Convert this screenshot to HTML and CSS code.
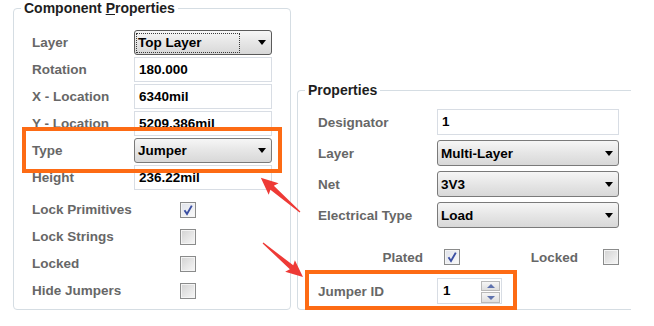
FILE: index.html
```html
<!DOCTYPE html>
<html lang="en">
<head>
    <meta charset="UTF-8">
    <title>Component Properties</title>
    <link rel="stylesheet" href="styles.css">
</head>
<body>
    <div class="screen">
        <fieldset class="group group-component">
            <legend>Component <u>P</u>roperties</legend>
            <div class="form form-component">
                <span class="label">Layer</span>
                <div class="combo combo-focused"><span class="combo-text"><span class="focus-rect">Top Layer</span></span><span class="combo-arrow"></span></div>
                <span class="label">Rotation</span>
                <div class="field">180.000</div>
                <span class="label">X - Location</span>
                <div class="field">6340mil</div>
                <span class="label">Y - Location</span>
                <div class="field">5209.386mil</div>
                <span class="label">Type</span>
                <div class="combo"><span class="combo-text">Jumper</span><span class="combo-arrow"></span></div>
                <span class="label">Height</span>
                <div class="field">236.22mil</div>
            </div>
            <div class="checks">
                <div class="check-row">
                    <span class="label">Lock Primitives</span>
                    <span class="checkbox checked"><svg width="12" height="12" viewBox="0 0 12 12"><path d="M2.5 6.2 L5 10 L9.8 1.6" fill="none" stroke="#3b4fa3" stroke-width="1.9"/></svg></span>
                </div>
                <div class="check-row">
                    <span class="label">Lock Strings</span>
                    <span class="checkbox"></span>
                </div>
                <div class="check-row">
                    <span class="label">Locked</span>
                    <span class="checkbox"></span>
                </div>
                <div class="check-row">
                    <span class="label">Hide Jumpers</span>
                    <span class="checkbox"></span>
                </div>
            </div>
        </fieldset>

        <fieldset class="group group-pad">
            <legend>Properties</legend>
            <div class="form form-pad">
                <span class="label">Designator</span>
                <div class="field">1</div>
                <span class="label">Layer</span>
                <div class="combo"><span class="combo-text">Multi-Layer</span><span class="combo-arrow"></span></div>
                <span class="label">Net</span>
                <div class="combo"><span class="combo-text">3V3</span><span class="combo-arrow"></span></div>
                <span class="label">Electrical Type</span>
                <div class="combo"><span class="combo-text">Load</span><span class="combo-arrow"></span></div>
            </div>
            <div class="form form-pad flags">
                <span class="label label-right">Plated</span>
                <div class="flag-cell">
                    <span class="checkbox checked"><svg width="12" height="12" viewBox="0 0 12 12"><path d="M2.5 6.2 L5 10 L9.8 1.6" fill="none" stroke="#3b4fa3" stroke-width="1.9"/></svg></span>
                    <span class="label flag-locked">Locked</span>
                    <span class="checkbox"></span>
                </div>
            </div>
            <div class="form form-pad jumper">
                <span class="label">Jumper ID</span>
                <div class="spin">
                    <span class="spin-value">1</span>
                    <span class="spin-buttons">
                        <span class="spin-btn"><span class="tri-up"></span></span>
                        <span class="spin-btn"><span class="tri-down"></span></span>
                    </span>
                </div>
            </div>
        </fieldset>

        <div class="highlight highlight-type"></div>
        <div class="highlight highlight-jumper"></div>

        <svg class="arrows" width="654" height="326" viewBox="0 0 654 326">
            <polygon transform="translate(300 212) rotate(221.1)" points="0,-0.6 37,-2.6 35,-7.5 52,0 35,7.5 37,2.6 0,0.6" fill="#ee3a36"/>
            <polygon transform="translate(263 243) rotate(40.4)" points="0,-0.6 37.5,-2.6 35.5,-7.5 52.5,0 35.5,7.5 37.5,2.6 0,0.6" fill="#ee3a36"/>
        </svg>
    </div>
</body>
</html>
```

FILE: styles.css
```css
* {
    margin: 0;
    padding: 0;
    box-sizing: border-box;
}

body {
    background-color: #fff;
    font-family: "Liberation Sans", Arial, sans-serif;
    font-size: 13.5px;
    font-weight: bold;
    color: #676767;
}

.screen {
    position: relative;
    width: 654px;
    height: 326px;
    display: flex;
    align-items: flex-start;
    padding-left: 13px;
    overflow: hidden;
}

/* group boxes */
.group {
    border: 1px solid #d5dde3;
    border-radius: 4px;
    min-width: 0;
}

.group legend {
    padding: 0 3px;
    font-size: 14px;
    line-height: 16px;
    color: #1e1e1e;
}

.group legend u {
    text-decoration-thickness: 1px;
}

.group-component {
    width: 278px;
    height: 310px;
    padding: 14px 0 0 7px;
}

.group-pad {
    width: 334px;
    height: 228px;
    margin: 82px 0 0 6px;
    padding: 11px 0 0 7px;
    border-right: none;
    border-radius: 4px 0 0 4px;
}

/* label / control grid */
.form {
    display: grid;
    align-items: center;
}

.form-component {
    grid-template-columns: 102px 138px;
    grid-auto-rows: 25px;
    row-gap: 2px;
    margin-left: 11px;
}

.form-pad {
    grid-template-columns: 119px 182px;
    grid-auto-rows: 26px;
    row-gap: 5px;
    margin-left: 13px;
}

.label {
    white-space: nowrap;
}

.label-right {
    text-align: right;
    padding-right: 14px;
}

.field {
    height: 100%;
    border: 1px solid #d8dde4;
    background-color: #fff;
    color: #000;
    padding-left: 4px;
    line-height: 23px;
    white-space: nowrap;
    overflow: hidden;
}

.combo {
    height: 100%;
    display: flex;
    align-items: center;
    border: 1px solid #7a7a7a;
    border-radius: 3px;
    background: linear-gradient(#f6f6f6, #e6e6e6 50%, #d8d8d8);
    color: #000;
    padding: 0 5px 0 3px;
}

.combo-focused {
    border-color: #5a5a5a;
    padding: 0 5px 0 0;
}

.combo-text {
    flex: 1;
    white-space: nowrap;
}

.focus-rect {
    display: block;
    margin: 1px 18px 1px 1px;
    border: 1px dotted #3a3a3a;
    line-height: 18px;
    padding-left: 1px;
}

.combo-arrow {
    width: 0;
    height: 0;
    border-left: 4px solid transparent;
    border-right: 4px solid transparent;
    border-top: 5px solid #000;
}

/* checkboxes */
.checks {
    margin: 6px 0 0 11px;
}

.check-row {
    display: grid;
    grid-template-columns: 148px 16px;
    align-items: center;
    height: 27px;
}

.checkbox {
    width: 16px;
    height: 16px;
    display: flex;
    align-items: center;
    justify-content: center;
    border: 1px solid #8a8b8b;
    box-shadow: inset 0 0 0 1px #f4f4f4;
    background: linear-gradient(135deg, #d2d2d2, #f7f7f7);
}

.checkbox.checked {
    background: linear-gradient(135deg, #dfe2ea, #fafafa);
}

.flags {
    margin-top: 16px;
}

.flag-cell {
    display: flex;
    align-items: center;
    padding-left: 7px;
}

.flag-locked {
    margin: 0 25px 0 auto;
}

/* jumper id spin box */
.jumper {
    margin-top: 8px;
}

.spin {
    width: 65px;
    height: 100%;
    display: flex;
    border: 1px solid #d8dde4;
    background-color: #fff;
    color: #000;
}

.spin-value {
    flex: 1;
    padding-left: 5px;
    line-height: 24px;
}

.spin-buttons {
    display: flex;
    flex-direction: column;
    gap: 1px;
    padding: 2px 1px 0 0;
}

.spin-btn {
    width: 19px;
    height: 10px;
    display: flex;
    align-items: center;
    justify-content: center;
    border: 1px solid #b9b9b9;
    background: linear-gradient(#f6f6f6, #dedede);
}

.spin-btn + .spin-btn {
    height: 11px;
}

.tri-up,
.tri-down {
    width: 0;
    height: 0;
    border-left: 4px solid transparent;
    border-right: 4px solid transparent;
}

.tri-up {
    border-bottom: 4px solid #5f72ad;
}

.tri-down {
    border-top: 4px solid #5f72ad;
}

/* annotation overlay */
.highlight {
    position: absolute;
    border: 4px solid #fd6b14;
}

.highlight-type {
    left: 22px;
    top: 127px;
    width: 260px;
    height: 46px;
}

.highlight-jumper {
    left: 305px;
    top: 270px;
    width: 212px;
    height: 40px;
}

.arrows {
    position: absolute;
    left: 0;
    top: 0;
    pointer-events: none;
}
```
